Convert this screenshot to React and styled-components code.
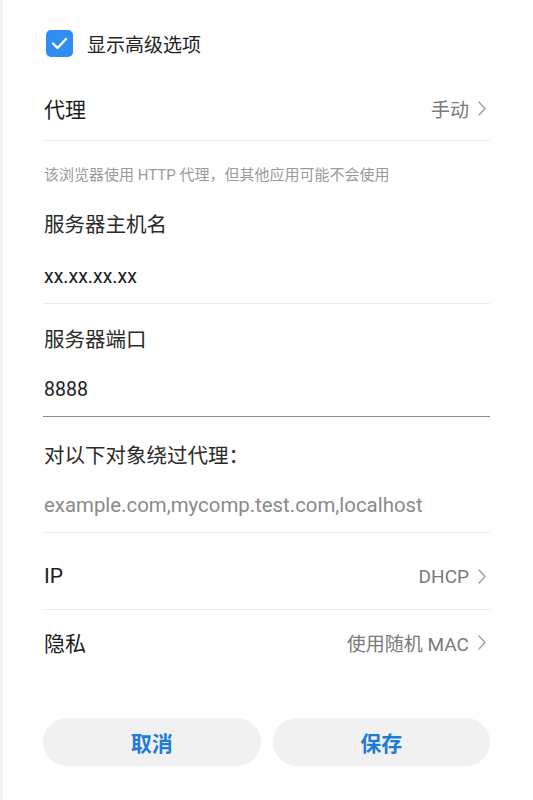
import React from "react";
import styled, { createGlobalStyle } from "styled-components";

const Global = createGlobalStyle`
  html, body { margin: 0; padding: 0; background: #fff; }
  body { font-family: Roboto, "Noto Sans CJK SC", "Noto Sans", sans-serif; }
  * { box-sizing: border-box; }
`;

const Page = styled.div`
  width: 533px;
  min-height: 800px;
  background: #fff;
  padding: 16px 43px 0 40px;
  display: flex;
  flex-direction: column;
  border-left: 3px solid #f2f2f2;
`;

const CheckRow = styled.label`
  height: 54px;
  display: flex;
  align-items: center;
  gap: 14px;
  padding-left: 3px;
`;

const Box = styled.span`
  width: 27px;
  height: 27px;
  border-radius: 5px;
  background: #2f8ef2;
  display: flex;
  align-items: center;
  justify-content: center;
`;

const CheckText = styled.span`
  font-size: 19px;
  color: #222;
`;

const NavRow = styled.div`
  display: flex;
  align-items: center;
  justify-content: space-between;
  height: ${(p) => p.$h}px;
  margin-top: ${(p) => p.$mt || 0}px;
  padding-top: ${(p) => p.$pt || 0}px;
  border-bottom: ${(p) => (p.$border ? "1px solid #ececec" : "none")};
  padding-left: 1px;
`;

const NavTitle = styled.span`
  font-size: 21px;
  color: #1c1c1c;
`;

const NavValue = styled.span`
  display: flex;
  align-items: center;
  gap: 9px;
  font-size: 19px;
  color: #7a7a7a;
  padding-right: 4px;
`;

const Note = styled.div`
  margin-top: 24px;
  line-height: 20px;
  font-size: 15px;
  color: #9a9a9a;
  padding-left: 1px;
`;

const Field = styled.div`
  display: flex;
  flex-direction: column;
  padding-bottom: ${(p) => p.$pb}px;
  border-bottom: ${(p) => p.$line};
  padding-left: 1px;
`;

const Label = styled.div`
  margin-top: ${(p) => p.$mt}px;
  line-height: 24px;
  font-size: 20.5px;
  color: #2a2a2a;
`;

const Value = styled.div`
  margin-top: ${(p) => p.$mt}px;
  line-height: 24px;
  font-size: ${(p) => (p.$hint ? 20.4 : 19.5)}px;
  color: ${(p) => (p.$hint ? "#8a8a8a" : "#1c1c1c")};
`;

const Buttons = styled.div`
  margin-top: 44px;
  display: grid;
  grid-template-columns: 1fr 1fr;
  gap: 12px;
`;

const Btn = styled.button`
  height: 48px;
  border: none;
  border-radius: 24px;
  background: #f1f1f1;
  color: #1f7bd6;
  font-family: "Noto Sans CJK SC", sans-serif;
  font-size: 21px;
  font-weight: 700;
`;

const Chevron = () => (
  <svg width="8" height="15" viewBox="0 0 8 15">
    <polyline points="1,1 7,7.5 1,14" fill="none" stroke="#a0a0a0" strokeWidth="1.4" strokeLinecap="round" strokeLinejoin="round" />
  </svg>
);

const Check = () => (
  <svg width="17" height="13" viewBox="0 0 17 13">
    <polyline points="2,6.5 6.5,11 15,2" fill="none" stroke="#fff" strokeWidth="2.4" strokeLinecap="round" strokeLinejoin="round" />
  </svg>
);

export default function App() {
  return (
    <>
      <Global />
      <Page>
        <CheckRow>
          <Box>
            <Check />
          </Box>
          <CheckText>显示高级选项</CheckText>
        </CheckRow>
        <NavRow $h={65} $mt={6} $border>
          <NavTitle>代理</NavTitle>
          <NavValue>
            手动 <Chevron />
          </NavValue>
        </NavRow>
        <Note>该浏览器使用 HTTP 代理，但其他应用可能不会使用</Note>
        <Field $pb={14} $line="1px solid #ececec">
          <Label $mt={28}>服务器主机名</Label>
          <Value $mt={28}>xx.xx.xx.xx</Value>
        </Field>
        <Field $pb={14} $line="1.5px solid #8c8c8c">
          <Label $mt={24}>服务器端口</Label>
          <Value $mt={26}>8888</Value>
        </Field>
        <Field $pb={15} $line="1px solid #ececec">
          <Label $mt={27}>对以下对象绕过代理：</Label>
          <Value $mt={25} $hint>
            example.com,mycomp.test.com,localhost
          </Value>
        </Field>
        <NavRow $h={77} $pt={10} $border>
          <NavTitle>IP</NavTitle>
          <NavValue>
            DHCP <Chevron />
          </NavValue>
        </NavRow>
        <NavRow $h={64}>
          <NavTitle>隐私</NavTitle>
          <NavValue>
            使用随机 MAC <Chevron />
          </NavValue>
        </NavRow>
        <Buttons>
          <Btn>取消</Btn>
          <Btn>保存</Btn>
        </Buttons>
      </Page>
    </>
  );
}
